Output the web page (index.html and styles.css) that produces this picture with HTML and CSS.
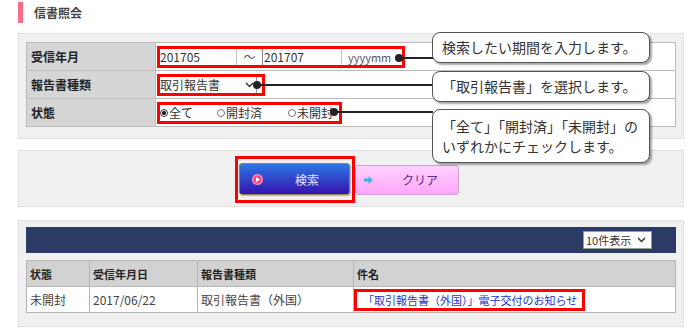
FILE: index.html
```html
<!DOCTYPE html>
<html lang="ja">
<head>
  <meta charset="UTF-8">
  <title>信書照会</title>
  <link rel="stylesheet" href="styles.css">
</head>
<body>
<div class="page">

  <h1 class="page-title">信書照会</h1>

  <!-- search conditions -->
  <div class="panel search-panel">
    <table class="form-table">
      <tr>
        <th>受信年月</th>
        <td>
          <div class="mark mark-range">
            <span class="ym ym-from">201705</span>
            <span class="tilde">～</span>
            <span class="ym ym-to">201707</span>
            <span class="hint">yyyymm</span>
          </div>
        </td>
      </tr>
      <tr>
        <th>報告書種類</th>
        <td>
          <div class="mark mark-kind">
            <span class="select-text">取引報告書</span>
            <svg class="chev" width="9" height="6" viewBox="0 0 9 6"><path d="M1 1 L4.5 4.5 L8 1" fill="none" stroke="#333" stroke-width="1.5"/></svg>
          </div>
        </td>
      </tr>
      <tr>
        <th>状態</th>
        <td>
          <div class="mark mark-state">
            <span class="radio radio-all"><i class="dot checked"></i>全て</span>
            <span class="radio radio-open"><i class="dot"></i>開封済</span>
            <span class="radio"><i class="dot"></i>未開封</span>
          </div>
        </td>
      </tr>
    </table>
  </div>

  <!-- buttons -->
  <div class="panel button-panel">
    <div class="search-wrap">
      <button class="btn btn-search">
        <svg class="btn-icon" width="11" height="11" viewBox="0 0 11 11"><circle cx="5.5" cy="5.5" r="5.5" fill="#ff8fb8"/><circle cx="5.5" cy="5.5" r="4.3" fill="#ee4f86"/><path d="M4 3 L8 5.5 L4 8 Z" fill="#fff"/></svg>
        <span>検索</span>
      </button>
    </div>
    <button class="btn btn-clear">
      <svg class="btn-icon" width="9" height="8" viewBox="0 0 9 8"><path d="M0 2.5 H4.5 V0 L9 4 L4.5 8 V5.5 H0 Z" fill="#39b4ee"/></svg>
      <span>クリア</span>
    </button>
  </div>

  <!-- results -->
  <div class="panel result-panel">
    <div class="result-bar">
      <div class="count-select">
        <span>10件表示</span>
        <svg width="9" height="6" viewBox="0 0 9 6"><path d="M1 1 L4.5 4.5 L8 1" fill="none" stroke="#333" stroke-width="1.5"/></svg>
      </div>
    </div>
    <table class="result-table">
      <tr>
        <th class="col-state">状態</th>
        <th class="col-date">受信年月日</th>
        <th class="col-kind">報告書種類</th>
        <th>件名</th>
      </tr>
      <tr>
        <td>未開封</td>
        <td>2017/06/22</td>
        <td>取引報告書（外国）</td>
        <td class="subject-cell"><a class="subject-link" href="#">「取引報告書（外国）」電子交付のお知らせ</a></td>
      </tr>
    </table>
  </div>

  <!-- annotations -->
  <div class="connector line-1"></div>
  <div class="connector line-2"></div>
  <div class="connector line-3"></div>
  <div class="callout callout-1">検索したい期間を入力します。</div>
  <div class="callout callout-2">「取引報告書」を選択します。</div>
  <div class="callout callout-3">「全て」「開封済」「未開封」の<br>いずれかにチェックします。</div>

</div>
</body>
</html>
```

FILE: styles.css
```css
body {
  margin: 0;
  font-family: "Noto Sans CJK JP", "Noto Sans", sans-serif;
  color: #333;
  background: #fff;
}

.page {
  position: relative;
  width: 700px;
  height: 333px;
  overflow: hidden;
}

/* page heading */
.page-title {
  margin: 2px 0 10px 18px;
  height: 21px;
  border-left: 5px solid #ff6b86;
  padding-left: 11px;
  font-size: 12px;
  line-height: 21px;
  font-weight: bold;
  color: #444;
}

/* grey boxes */
.panel {
  margin: 0 16px 0 18px;
  background: #f0f0f0;
  border: 1px solid #e2e2e2;
  padding: 8px 7px;
}

.search-panel {
  padding-bottom: 11px;
  margin-bottom: 11px;
}

/* search form table */
.form-table {
  width: 100%;
  border-collapse: collapse;
  background: #fff;
}

.form-table th,
.form-table td {
  border: 1px solid #bbb;
  height: 27px;
  padding: 0;
}

.form-table th {
  width: 124px;
  padding-left: 4px;
  background: #d6d6d6;
  text-align: left;
  font-size: 12px;
  font-weight: bold;
  color: #222;
}

.form-table td {
  padding-left: 1px;
  font-size: 12px;
  color: #333;
}

.mark {
  display: flex;
  align-items: center;
  box-sizing: border-box;
  height: 22px;
  border: 3px solid #f00;
  line-height: 16px;
}

.mark-range { width: 248px; }
.mark-kind { width: 108px; }
.mark-state { width: 185px; }

.ym-from {
  width: 76px;
  border-right: 1px solid #c4c4c4;
}

.tilde {
  width: 25px;
  text-align: center;
  color: #555;
}

.ym-to {
  width: 77px;
  padding-left: 1px;
  border-left: 1px solid #888;
  border-right: 1px solid #c4c4c4;
}

.hint {
  padding-left: 6px;
  font-size: 11px;
  color: #555;
}

.select-text { width: 85px; }

.chev {
  margin-right: 2px;
}

.mark-kind .chev {
  padding-right: 2px;
  border-right: 1px solid #999;
  height: 16px;
}

.radio {
  display: flex;
  align-items: center;
}

.radio-all { width: 57px; }
.radio-open { width: 71px; }

.dot {
  width: 8px;
  height: 8px;
  margin-right: 1px;
  border: 1px solid #777;
  border-radius: 50%;
  box-sizing: border-box;
  background: #fff;
}

.dot.checked {
  border-color: #333;
  background: radial-gradient(circle, #222 0 2px, #fff 2.2px);
}

/* buttons */
.button-panel {
  display: flex;
  justify-content: center;
  align-items: center;
  padding: 5px 7px 3px;
  margin-bottom: 13px;
}

.search-wrap {
  border: 3px solid #f00;
  padding: 4px 2px 5px 1px;
  margin-left: -8px;
}

.btn {
  display: flex;
  align-items: center;
  font-family: inherit;
  font-size: 12px;
  border-radius: 3px;
  cursor: pointer;
}

.btn-search {
  width: 111px;
  height: 32px;
  padding: 0 0 0 12px;
  background: linear-gradient(#2a78e4, #3611ac);
  border: 1px solid #8c8a58;
  color: #e6e6ff;
  box-shadow: 1px 1px 1px rgba(0, 0, 0, 0.25);
}

.btn-search span {
  margin-left: 32px;
}

.btn-clear {
  width: 104px;
  height: 30px;
  padding: 0 0 0 8px;
  background: linear-gradient(#ffd2ff, #ffa6fb);
  border: 1px solid #caa4c8;
  color: #5a2a90;
}

.btn-clear span {
  margin-left: 29px;
}

/* results */
.result-panel {
  padding: 6px 7px 13px;
}

.result-bar {
  display: flex;
  justify-content: flex-end;
  align-items: center;
  height: 26px;
  padding-right: 24px;
  background: #2c3b65;
  margin-bottom: 7px;
}

.count-select {
  display: flex;
  align-items: center;
  justify-content: space-between;
  box-sizing: border-box;
  width: 69px;
  height: 18px;
  padding: 0 5px 0 2px;
  background: #fff;
  border: 1px solid #999;
  font-size: 11px;
  line-height: 16px;
  white-space: nowrap;
  color: #333;
}

.result-table {
  width: 100%;
  border-collapse: collapse;
  background: #fff;
  font-size: 11px;
}

.result-table th,
.result-table td {
  height: 25px;
  padding: 0 0 0 3px;
  border: 1px solid #b5b5b5;
  text-align: left;
}

.result-table th {
  background: #d2d2d2;
  font-weight: bold;
  color: #222;
}

.result-table td {
  color: #444;
  font-size: 12px;
}

.col-state { width: 59px; }
.col-date { width: 104px; }
.col-kind { width: 152px; }

.result-table td.subject-cell {
  padding: 0;
}

.subject-link {
  display: block;
  width: 231px;
  height: 22px;
  box-sizing: border-box;
  padding-left: 6px;
  border: 3px solid #f00;
  font-size: 11px;
  line-height: 16px;
  color: #2233cc;
  text-decoration: none;
}

/* annotation bubbles */
.callout {
  position: absolute;
  left: 432px;
  width: 218px;
  box-sizing: border-box;
  padding: 0 0 0 9px;
  background: #fff;
  border: 1px solid #555;
  border-radius: 8px;
  box-shadow: 2px 2px 2px rgba(0, 0, 0, 0.35);
  font-size: 14px;
  color: #333;
}

.callout-1 { top: 32px; height: 31px; line-height: 29px; }
.callout-2 { top: 71px; height: 31px; line-height: 29px; }
.callout-3 { top: 109px; height: 54px; line-height: 20px; padding-top: 6px; }

.connector {
  position: absolute;
  height: 2px;
  background: #222;
}

.connector::before {
  content: "";
  position: absolute;
  left: -4px;
  top: -3px;
  width: 8px;
  height: 8px;
  border-radius: 50%;
  background: #222;
}

.line-1 { left: 399px; top: 57px; width: 34px; }
.line-2 { left: 257px; top: 84px; width: 176px; }
.line-3 { left: 334px; top: 111px; width: 99px; }
```
